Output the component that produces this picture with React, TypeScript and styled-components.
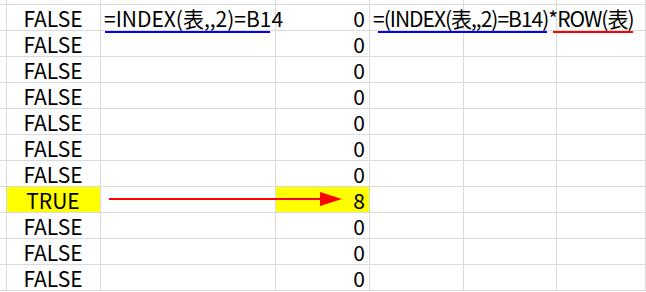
import React from "react";
import styled, { createGlobalStyle } from "styled-components";

const GlobalStyle = createGlobalStyle`
  html, body {
    margin: 0;
    padding: 0;
    background: #ffffff;
  }
  body {
    font-family: "Noto Sans CJK JP", "Noto Sans", sans-serif;
  }
`;

const Sheet = styled.div`
  position: relative;
  width: 646px;
  height: 292px;
  overflow: hidden;
  background: #ffffff;
`;

const Grid = styled.div`
  display: grid;
  grid-template-columns: 7px 94px 175px 94px 94px 93px 1fr;
  grid-template-rows: 5px;
  grid-auto-rows: 26px;
`;

const Cell = styled.div<{ $align?: "left" | "center" | "right"; $fill?: string }>`
  box-sizing: border-box;
  border-right: 1px solid #dadada;
  border-bottom: 1px solid #dadada;
  background: ${(p) => p.$fill || "transparent"};
  display: flex;
  align-items: center;
  justify-content: ${(p) =>
    p.$align === "center" ? "center" : p.$align === "right" ? "flex-end" : "flex-start"};
  padding: 2px 4px 0 3px;
  font-size: 21px;
  line-height: 23px;
  color: #000000;
  white-space: nowrap;
  min-width: 0;
  position: relative;
  z-index: ${(p) => (p.$align === "left" ? 1 : 0)};
`;

const EdgeCell = styled(Cell)`
  padding: 0;
`;

const Formula = styled.span<{ $tight?: boolean }>`
  letter-spacing: ${(p) => (p.$tight ? "-1px" : "0")};
`;

const Underline = styled.div<{ $color: string }>`
  position: absolute;
  height: 2px;
  background: ${(p) => p.$color};
  z-index: 3;
`;

const Arrow = styled.svg`
  position: absolute;
  left: 105px;
  top: 190px;
  z-index: 3;
`;

const rows = [false, false, false, false, false, false, false, true, false, false, false];

export default function App() {
  return (
    <>
      <GlobalStyle />
      <Sheet>
        <Grid>
          {Array.from({ length: 7 }).map((_, i) => (
            <EdgeCell key={"top" + i} />
          ))}
          {rows.map((hit, r) => (
            <React.Fragment key={r}>
              <EdgeCell />
              <Cell $align="center" $fill={hit ? "#ffff00" : undefined}>
                {hit ? "TRUE" : "FALSE"}
              </Cell>
              <Cell $align="left">
                {r === 0 && <Formula>=INDEX(表,,2)=B14</Formula>}
              </Cell>
              <Cell $align="right" $fill={hit ? "#ffff00" : undefined}>
                {hit ? "8" : "0"}
              </Cell>
              <Cell $align="left">
                {r === 0 && <Formula $tight>=(INDEX(表,,2)=B14)*ROW(表)</Formula>}
              </Cell>
              <Cell />
              <Cell />
            </React.Fragment>
          ))}
        </Grid>
        <Underline $color="#0000ff" style={{ left: 105, top: 31, width: 165 }} />
        <Underline $color="#0000ff" style={{ left: 378, top: 31, width: 169 }} />
        <Underline $color="#ff0000" style={{ left: 553, top: 31, width: 80 }} />
        <Arrow width="240" height="18" viewBox="0 0 240 18">
          <line x1="4" y1="9" x2="216" y2="9" stroke="#ff0000" strokeWidth="2" />
          <polygon points="215,2 237,9 215,16" fill="#ff0000" />
        </Arrow>
      </Sheet>
    </>
  );
}
